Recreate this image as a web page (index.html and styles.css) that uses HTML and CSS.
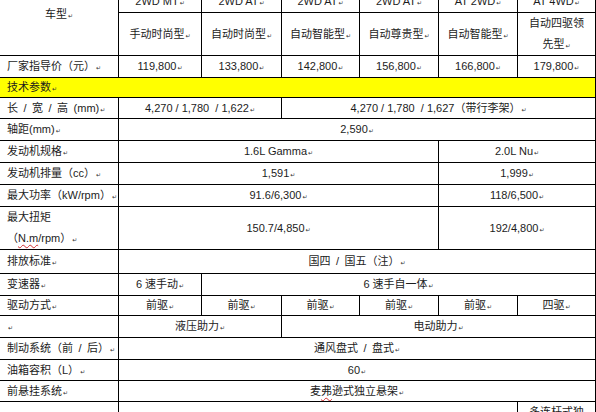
FILE: index.html
```html
<!DOCTYPE html>
<html lang="zh-CN">
<head>
<meta charset="utf-8">
<title>车型参数</title>
<link rel="stylesheet" href="styles.css">
</head>
<body>
<table class="spec">
  <colgroup>
    <col class="c0"><col class="c1"><col class="c2"><col class="c3"><col class="c4"><col class="c5"><col class="c6">
  </colgroup>
  <tr>
    <td rowspan="2" class="model">车型<span class="pm">↵</span></td>
    <td>2WD MT<span class="pm">↵</span></td>
    <td>2WD AT<span class="pm">↵</span></td>
    <td>2WD AT<span class="pm">↵</span></td>
    <td>2WD AT<span class="pm">↵</span></td>
    <td>AT 2WD<span class="pm">↵</span></td>
    <td>AT 4WD<span class="pm">↵</span></td>
  </tr>
  <tr class="tall">
    <td>手动时尚型<span class="pm">↵</span></td>
    <td>自动时尚型<span class="pm">↵</span></td>
    <td>自动智能型<span class="pm">↵</span></td>
    <td>自动尊贵型<span class="pm">↵</span></td>
    <td>自动智能型<span class="pm">↵</span></td>
    <td>自动四驱领先型<span class="pm">↵</span></td>
  </tr>
  <tr>
    <td class="lbl">厂家指导价（元）<span class="pm">↵</span></td>
    <td>119,800<span class="pm">↵</span></td>
    <td>133,800<span class="pm">↵</span></td>
    <td>142,800<span class="pm">↵</span></td>
    <td>156,800<span class="pm">↵</span></td>
    <td>166,800<span class="pm">↵</span></td>
    <td>179,800<span class="pm">↵</span></td>
  </tr>
  <tr class="section">
    <td colspan="7" class="lbl">技术参数<span class="pm">↵</span></td>
  </tr>
  <tr class="r21">
    <td class="lbl">长&ensp;/&ensp;宽&ensp;/&ensp;高&ensp;(mm)<span class="pm">↵</span></td>
    <td colspan="2">4,270 / 1,780 &nbsp;/ 1,622<span class="pm">↵</span></td>
    <td colspan="4">4,270 / 1,780 &nbsp;/ 1,627（带行李架）<span class="pm">↵</span></td>
  </tr>
  <tr>
    <td class="lbl">轴距(mm)<span class="pm">↵</span></td>
    <td colspan="6">2,590<span class="pm">↵</span></td>
  </tr>
  <tr>
    <td class="lbl">发动机规格<span class="pm">↵</span></td>
    <td colspan="4">1.6L Gamma<span class="pm">↵</span></td>
    <td colspan="2">2.0L Nu<span class="pm">↵</span></td>
  </tr>
  <tr>
    <td class="lbl">发动机排量（cc）<span class="pm">↵</span></td>
    <td colspan="4">1,591<span class="pm">↵</span></td>
    <td colspan="2">1,999<span class="pm">↵</span></td>
  </tr>
  <tr>
    <td class="lbl">最大功率（kW/rpm）<span class="pm">↵</span></td>
    <td colspan="4">91.6/6,300<span class="pm">↵</span></td>
    <td colspan="2">118/6,500<span class="pm">↵</span></td>
  </tr>
  <tr class="tall">
    <td class="lbl">最大扭矩<br>（<span class="typo">N.m</span>/rpm）<span class="pm">↵</span></td>
    <td colspan="4">150.7/4,850<span class="pm">↵</span></td>
    <td colspan="2">192/4,800<span class="pm">↵</span></td>
  </tr>
  <tr class="r24">
    <td class="lbl">排放标准<span class="pm">↵</span></td>
    <td colspan="6">国四&ensp;/&ensp;国五（注）<span class="pm">↵</span></td>
  </tr>
  <tr>
    <td class="lbl">变速器<span class="pm">↵</span></td>
    <td>6 速手动<span class="pm">↵</span></td>
    <td colspan="5">6 速手自一体<span class="pm">↵</span></td>
  </tr>
  <tr class="r20">
    <td class="lbl">驱动方式<span class="pm">↵</span></td>
    <td>前驱<span class="pm">↵</span></td>
    <td>前驱<span class="pm">↵</span></td>
    <td>前驱<span class="pm">↵</span></td>
    <td>前驱<span class="pm">↵</span></td>
    <td>前驱<span class="pm">↵</span></td>
    <td>四驱<span class="pm">↵</span></td>
  </tr>
  <tr>
    <td class="lbl"><span class="pm">↵</span></td>
    <td colspan="2">液压助力<span class="pm">↵</span></td>
    <td colspan="4">电动助力<span class="pm">↵</span></td>
  </tr>
  <tr>
    <td class="lbl">制动系统（前&ensp;/&ensp;后）<span class="pm">↵</span></td>
    <td colspan="6">通风盘式&ensp;/&ensp;盘式<span class="pm">↵</span></td>
  </tr>
  <tr class="r21">
    <td class="lbl">油箱容积（L）<span class="pm">↵</span></td>
    <td colspan="6">60<span class="pm">↵</span></td>
  </tr>
  <tr class="r21">
    <td class="lbl">前悬挂系统<span class="pm">↵</span></td>
    <td colspan="6">麦<span class="typo">弗</span>逊式独立悬架<span class="pm">↵</span></td>
  </tr>
  <tr class="tall">
    <td class="lbl">后悬挂系统<span class="pm">↵</span></td>
    <td colspan="5">扭力梁式半独立悬架<span class="pm">↵</span></td>
    <td class="top">多连杆式独立悬架<span class="pm">↵</span></td>
  </tr>
</table>
</body>
</html>
```

FILE: styles.css
```css
html, body {
  margin: 0;
  padding: 0;
  background: #ffffff;
  overflow: hidden;
}

body {
  font-family: "Liberation Sans", "Noto Sans CJK SC", sans-serif;
  font-size: 11px;
  color: #1c1c1c;
}

.spec {
  border-collapse: collapse;
  table-layout: fixed;
  width: 597px;
  margin: -10px 0 0 -1px;
}

.c0 { width: 119px; }
.c1 { width: 83px; }
.c2 { width: 80px; }
.c3 { width: 78px; }
.c4 { width: 79px; }
.c5 { width: 79px; }
.c6 { width: 78px; }

.spec td {
  border: 1px solid #000;
  padding: 0 6px;
  height: 21px;
  line-height: 21px;
  text-align: center;
  vertical-align: middle;
  white-space: normal;
  overflow: hidden;
}

.spec td.lbl {
  text-align: left;
  padding: 0 0 0 7px;
  white-space: nowrap;
}

.spec td.model {
  vertical-align: top;
  padding-top: 13px;
}

.spec td.top {
  vertical-align: top;
}

.spec tr.tall td {
  height: 41px;
  line-height: 21px;
}

.spec tr.section td {
  background: #ffff00;
  height: 19px;
  line-height: 19px;
}

.spec tr.r21 td {
  height: 20px;
  line-height: 20px;
}

.spec tr.r24 td {
  height: 23px;
  line-height: 23px;
}

.spec tr.r20 td {
  height: 19px;
  line-height: 19px;
}

.pm {
  font-family: "DejaVu Sans", sans-serif;
  font-size: 6px;
  line-height: 1;
  color: #333;
  margin-left: 1px;
}

.typo {
  text-decoration: underline wavy #d03030;
  text-decoration-thickness: 1px;
  text-underline-offset: 2px;
}
```
